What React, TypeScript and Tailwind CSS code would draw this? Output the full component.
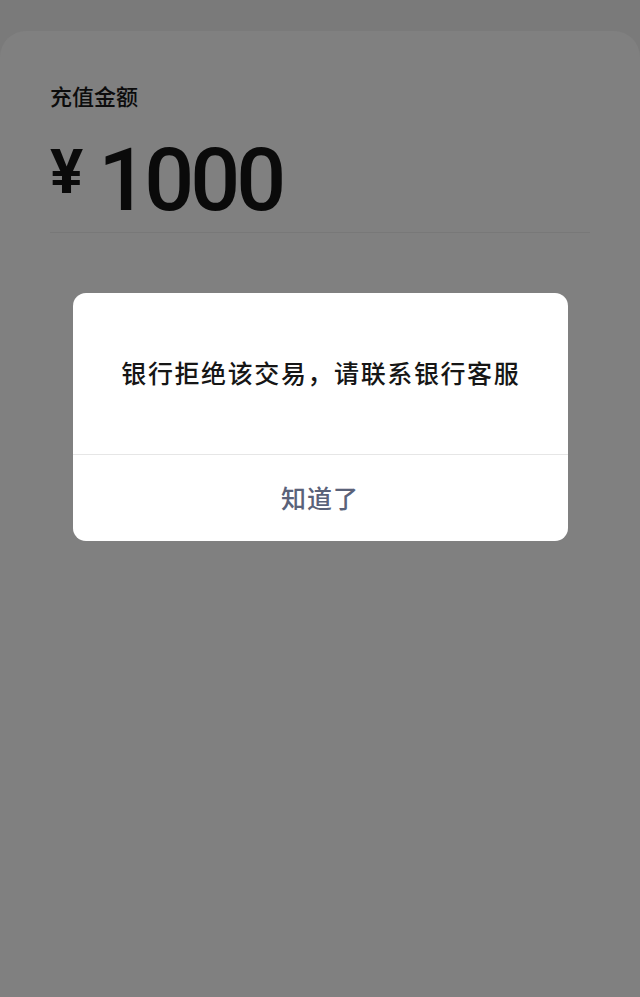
export default function App() {
  return (
    <div
      className="relative flex h-[997px] flex-col bg-[#7a7a7a] pt-[31px]"
      style={{ fontFamily: '"Noto Sans CJK SC", "Noto Sans", sans-serif' }}
    >
      {/* Recharge card, shown dimmed under the mask */}
      <div className="flex-1 rounded-t-[26px] bg-[#808080] px-[50px] pt-[52px]">
        <div className="text-[22px] leading-[24px] font-medium text-[#0c0c0c]">充值金额</div>
        <div className="mt-[35px] flex items-start">
          <span
            className="text-[62px] leading-[60px] font-bold text-[#0a0a0a]"
            style={{ fontFamily: 'Roboto, "Noto Sans CJK SC", sans-serif' }}
          >
            ¥
          </span>
          <span
            className="ml-[15px] text-[88px] leading-[76px] font-medium tracking-[-4px] text-[#0a0a0a]"
            style={{ fontFamily: 'Roboto, sans-serif' }}
          >
            1000
          </span>
        </div>
        <div className="mt-[14px] h-px bg-[#787878]" />
      </div>

      {/* Alert dialog */}
      <div className="absolute inset-0 flex justify-center pt-[293px]">
        <div className="flex h-[248px] w-[495px] flex-col overflow-hidden rounded-[13px] bg-white">
          <div className="flex h-[161px] items-center justify-center pb-[4px]">
            <span className="pl-[1.6px] text-[25px] leading-[30px] font-medium tracking-[1.6px] text-[#161616]">
              银行拒绝该交易，请联系银行客服
            </span>
          </div>
          <div className="h-px bg-[#e6e6e6]" />
          <button className="flex flex-1 items-center justify-center text-[25px] font-medium tracking-[1px] text-[#5a6279]">
            知道了
          </button>
        </div>
      </div>
    </div>
  );
}
